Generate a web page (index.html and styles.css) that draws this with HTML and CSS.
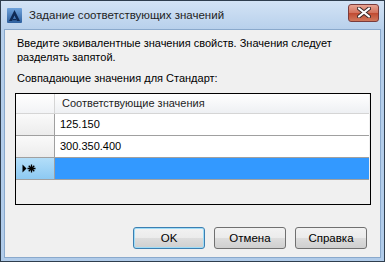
FILE: index.html
```html
<!DOCTYPE html>
<html>

<head>
  <title>Задание соответствующих значений</title>
  <meta charset="utf-8">
  <link rel="stylesheet" href="styles.css">
</head>

<body>
  <div class="window">
    <div class="titlebar">
      <svg class="app-icon" width="15" height="15" viewBox="0 0 15 15">
        <defs>
          <linearGradient id="ig" x1="0" y1="0" x2="0" y2="1">
            <stop offset="0" stop-color="#6fa3dc" />
            <stop offset="1" stop-color="#2d5f9e" />
          </linearGradient>
        </defs>
        <rect x="0" y="0" width="15" height="15" rx="1" fill="url(#ig)" />
        <path d="M7.5 2 L13 13 L10 13 L7.5 7.5 L5 13 L2 13 Z" fill="#0f2a55" />
        <path d="M6 11 L9 11 L9.6 12.3 L5.4 12.3 Z" fill="#0f2a55" />
      </svg>
      <span class="title">Задание соответствующих значений</span>
      <div class="close-btn">
        <svg width="14" height="11" viewBox="0 0 14 11">
          <path d="M2 1.5 L12 9.5 M12 1.5 L2 9.5" stroke="#3a2a2a" stroke-width="4" stroke-linecap="round" />
          <path d="M2 1.5 L12 9.5 M12 1.5 L2 9.5" stroke="#ffffff" stroke-width="2.2" stroke-linecap="round" />
        </svg>
      </div>
    </div>

    <div class="client">
      <p class="prompt">Введите эквивалентные значения свойств. Значения следует<br>разделять запятой.</p>
      <p class="label">Совпадающие значения для Стандарт:</p>

      <div class="grid">
        <div class="grid-row grid-header">
          <div class="row-head"></div>
          <div class="cell">Соответствующие значения</div>
        </div>
        <div class="grid-row">
          <div class="row-head"></div>
          <div class="cell">125.150</div>
        </div>
        <div class="grid-row">
          <div class="row-head"></div>
          <div class="cell">300.350.400</div>
        </div>
        <div class="grid-row new-row">
          <div class="row-head">
            <svg width="14" height="9" viewBox="0 0 14 9">
              <path d="M0.5 0.5 L4.5 4.5 L0.5 8.5 Z" fill="#000" />
              <path d="M9.5 0.5 V8.5 M5.5 4.5 H13.5 M6.7 1.7 L12.3 7.3 M12.3 1.7 L6.7 7.3" stroke="#000" stroke-width="1.3" />
            </svg>
          </div>
          <div class="cell"></div>
        </div>
      </div>

      <div class="buttons">
        <button class="btn btn-default">OK</button>
        <button class="btn">Отмена</button>
        <button class="btn">Справка</button>
      </div>
    </div>
  </div>
</body>

</html>
```

FILE: styles.css
```css
body {
  margin: 0;
  width: 385px;
  height: 262px;
  font-family: "Liberation Sans", Arial, sans-serif;
  font-size: 11px;
  color: #000;
}

.window {
  box-sizing: border-box;
  width: 385px;
  height: 262px;
  display: flex;
  flex-direction: column;
  border: 1px solid #2f3e4e;
  padding: 0 3px 3px 3px;
  background: linear-gradient(#d3e3f5, #b6cfeb 30px, #b0cbe9);
}

.titlebar {
  height: 28px;
  display: flex;
  align-items: center;
  padding-left: 3px;
}

.app-icon {
  margin-right: 7px;
}

.title {
  flex: 1;
  color: #1e1e1e;
  font-size: 11.5px;
}

.close-btn {
  width: 31px;
  height: 18px;
  margin-right: 2px;
  margin-top: -5px;
  box-sizing: border-box;
  border: 1px solid #7a3b3b;
  border-radius: 3px;
  background: linear-gradient(#e8a493, #d2705b 50%, #c04a31 51%, #d0785c);
  display: flex;
  align-items: center;
  justify-content: center;
}

.client {
  flex: 1;
  display: flex;
  flex-direction: column;
  background: #f0f0f0;
  border: 1px solid #8aa9cc;
  padding: 6px 9px 0 10px;
}

.prompt,
.label {
  margin: 0;
  padding-left: 2px;
  line-height: 14px;
}

.label {
  margin-top: 7px;
}

.grid {
  margin-top: 8px;
  height: 110px;
  border: 1px solid #000;
  background: #f0f0f0;
}

.grid-row {
  display: flex;
  height: 21px;
  border-bottom: 1px solid #a0a0a0;
  margin-right: 1px;
}

.row-head {
  width: 39px;
  border-right: 1px solid #a0a0a0;
  background: linear-gradient(#fafafa, #ececec);
  display: flex;
  align-items: center;
  padding-left: 6px;
  box-sizing: border-box;
}

.cell {
  flex: 1;
  background: #fff;
  padding-left: 5px;
  line-height: 21px;
}

.grid-header {
  height: 19px;
  border-bottom-color: #d5d5d5;
}

.grid-header .row-head {
  border-right-color: #d5d5d5;
  background: linear-gradient(#ffffff, #f2f3f5);
}

.grid-header .cell {
  background: linear-gradient(#ffffff, #eef0f3);
  padding-left: 7px;
  line-height: 19px;
  color: #1e1e1e;
}

.new-row .row-head {
  background: linear-gradient(#b3def9, #8dc9f2);
}

.new-row .cell {
  background: #3399ff;
}

.buttons {
  display: flex;
  justify-content: flex-end;
  gap: 9px;
  margin-top: 22px;
  margin-right: 4px;
}

.btn {
  width: 72px;
  height: 22px;
  padding: 0;
  font-family: "Liberation Sans", Arial, sans-serif;
  font-size: 11.5px;
  font-weight: normal;
  color: #000;
  border: 1px solid #707070;
  border-radius: 3px;
  background: linear-gradient(#f2f2f2, #ebebeb 50%, #dddddd 51%, #cfcfcf);
}

.btn-default {
  border-color: #3c7fb1;
  box-shadow: inset 0 0 0 1px #9fdcf7;
}
```
